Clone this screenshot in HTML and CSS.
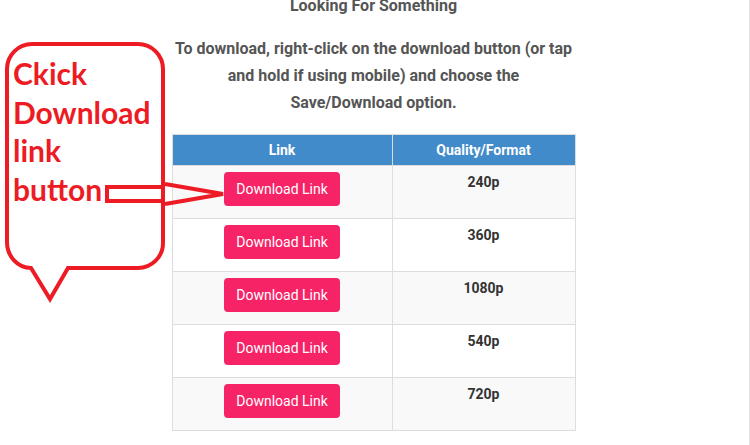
FILE: index.html
```html
<!DOCTYPE html>
<html>
  <head>
    <title>Download Links</title>
    <link rel="stylesheet" href="styles.css">
  </head>
  <body>
    <div class="page">
      <h3 class="title">Looking For Something</h3>
      <p class="intro">To download, right-click on the download button (or tap and hold if using mobile) and choose the Save/Download option.</p>

      <table class="links">
        <thead>
          <tr>
            <th class="col-link">Link</th>
            <th>Quality/Format</th>
          </tr>
        </thead>
        <tbody>
          <tr>
            <td class="col-link"><a class="dl-button" href="#">Download Link</a></td>
            <td class="quality">240p</td>
          </tr>
          <tr>
            <td class="col-link"><a class="dl-button" href="#">Download Link</a></td>
            <td class="quality">360p</td>
          </tr>
          <tr>
            <td class="col-link"><a class="dl-button" href="#">Download Link</a></td>
            <td class="quality">1080p</td>
          </tr>
          <tr>
            <td class="col-link"><a class="dl-button" href="#">Download Link</a></td>
            <td class="quality">540p</td>
          </tr>
          <tr>
            <td class="col-link"><a class="dl-button" href="#">Download Link</a></td>
            <td class="quality">720p</td>
          </tr>
        </tbody>
      </table>
    </div>

    <!-- hand drawn note on top of the page -->
    <div class="note">
      <svg class="note-shape" width="750" height="445" viewBox="0 0 750 445">
        <path d="M34 44 H138 A25 25 0 0 1 163 69 V243 A25 25 0 0 1 138 268 H68 L50 299 L31 268 A24 26 0 0 1 7 242 V69 A25 25 0 0 1 32 44 Z" />
        <rect x="107" y="187" width="56" height="14" />
        <path d="M165 184 L223 194 L165 204" />
      </svg>
      <div class="note-text">Ckick<br>Download<br>link<br>button</div>
    </div>
  </body>
</html>
```

FILE: styles.css
```css
body {
  margin: 0;
  padding: 0;
  font-family: Roboto, "Liberation Sans", Arial, sans-serif;
  background-color: #fff;
  color: #555;
  overflow: hidden;
}

.page {
  width: 747px;
  height: 445px;
  padding-right: 2px;
  border-right: 1px solid #e6e6e6;
  display: flex;
  flex-direction: column;
  align-items: center;
}

.title {
  margin: -8px 0 16px;
  font-size: 16px;
  line-height: 27px;
  font-weight: 700;
  color: #555;
}

.intro {
  width: 404px;
  margin: 0 0 18px;
  font-size: 16px;
  line-height: 27px;
  font-weight: 700;
  text-align: center;
  color: #555;
}

.links {
  width: 404px;
  border-collapse: collapse;
  border: 1px solid #ddd;
  font-size: 14px;
}

.links th {
  background-color: #428bca;
  color: #fff;
  font-weight: 700;
  padding: 6px 8px;
  line-height: 18px;
  border: 1px solid #ddd;
  text-align: center;
}

.links th.col-link,
.links td.col-link {
  width: 203px;
}

.links td {
  border: 1px solid #ddd;
  padding: 6px 8px 12px;
  text-align: center;
  vertical-align: top;
  line-height: 20px;
}

.links tbody tr:nth-child(odd) {
  background-color: #f9f9f9;
}

.quality {
  font-weight: 700;
  color: #333;
}

.dl-button {
  display: inline-block;
  height: 34px;
  line-height: 34px;
  padding: 0 12.5px;
  border-radius: 4px;
  background-color: #f72367;
  color: #fff;
  text-decoration: none;
  font-size: 14px;
}

.note {
  position: absolute;
  top: 0;
  left: 0;
  width: 750px;
  height: 445px;
  pointer-events: none;
}

.note-shape {
  position: absolute;
  top: 0;
  left: 0;
}

.note-shape path,
.note-shape rect {
  fill: none;
  stroke: #ed1c24;
  stroke-width: 4;
}

.note-text {
  position: absolute;
  left: 13px;
  top: 54px;
  font-family: Lato, "Open Sans", sans-serif;
  font-weight: 700;
  font-size: 30px;
  line-height: 38.5px;
  color: #ed1c24;
}
```
